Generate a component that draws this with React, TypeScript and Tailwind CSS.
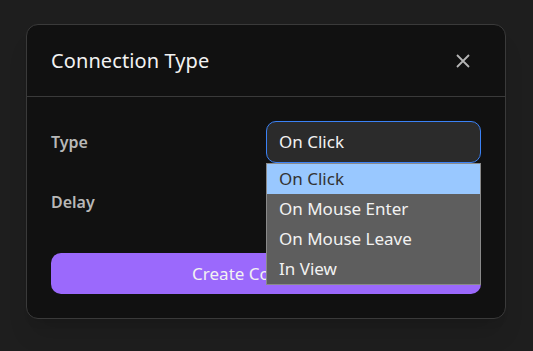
const font = { fontFamily: '"Noto Sans", "Open Sans", sans-serif' };

const options = ["On Click", "On Mouse Enter", "On Mouse Leave", "In View"];

export default function App() {
  return (
    <div className="flex h-[351px] w-[533px] items-start bg-[#1e1e1e] pl-[26px] pt-6" style={font}>
      <div className="w-[480px] rounded-xl border border-[#3a3a3a] bg-[#111111] shadow-xl">
        {/* Header */}
        <div className="flex h-[72px] items-center justify-between border-b border-[#3a3a3a] pl-6 pr-[34px]">
          <h2 className="text-[20px] font-normal tracking-[0.1px] text-[#f2f2f2]">Connection Type</h2>
          <svg width="16" height="16" viewBox="0 0 16 16" className="text-[#b5b5b5]">
            <path d="M2 2L14 14M14 2L2 14" stroke="currentColor" strokeWidth="1.8" />
          </svg>
        </div>

        {/* Body */}
        <div className="px-6 pb-6 pt-6">
          <div className="grid grid-cols-2 items-center gap-y-[18px]">
            <label className="text-[16px] font-semibold text-[#b8b8b8]">Type</label>
            <div className="relative">
              <div className="flex h-[42px] items-center rounded-[10px] border border-[#3b82f6] bg-[#2b2b2b] px-3 text-[17px] text-[#f2f2f2]">
                On Click
              </div>
              <ul className="absolute left-0 right-0 top-[42px] z-10 border border-[#8a8a8a] bg-[#5e5e5e]">
                {options.map((o, i) => (
                  <li
                    key={o}
                    className={
                      i === 0
                        ? "flex h-[30px] items-center bg-[#99c8ff] px-3 text-[17px] text-[#333333]"
                        : "flex h-[30px] items-center px-3 text-[17px] text-[#f2f2f2]"
                    }
                  >
                    {o}
                  </li>
                ))}
              </ul>
            </div>
            <label className="text-[16px] font-semibold text-[#b8b8b8]">Delay</label>
            <div className="h-[42px] rounded-[10px] bg-[#2b2b2b]" />
          </div>
          <button className="mt-[30px] flex h-[41px] w-full items-center justify-center rounded-[10px] bg-[#9b69fc] text-[17px] text-[#f2f2f2]">
            Create Connection
          </button>
        </div>
      </div>
    </div>
  );
}
